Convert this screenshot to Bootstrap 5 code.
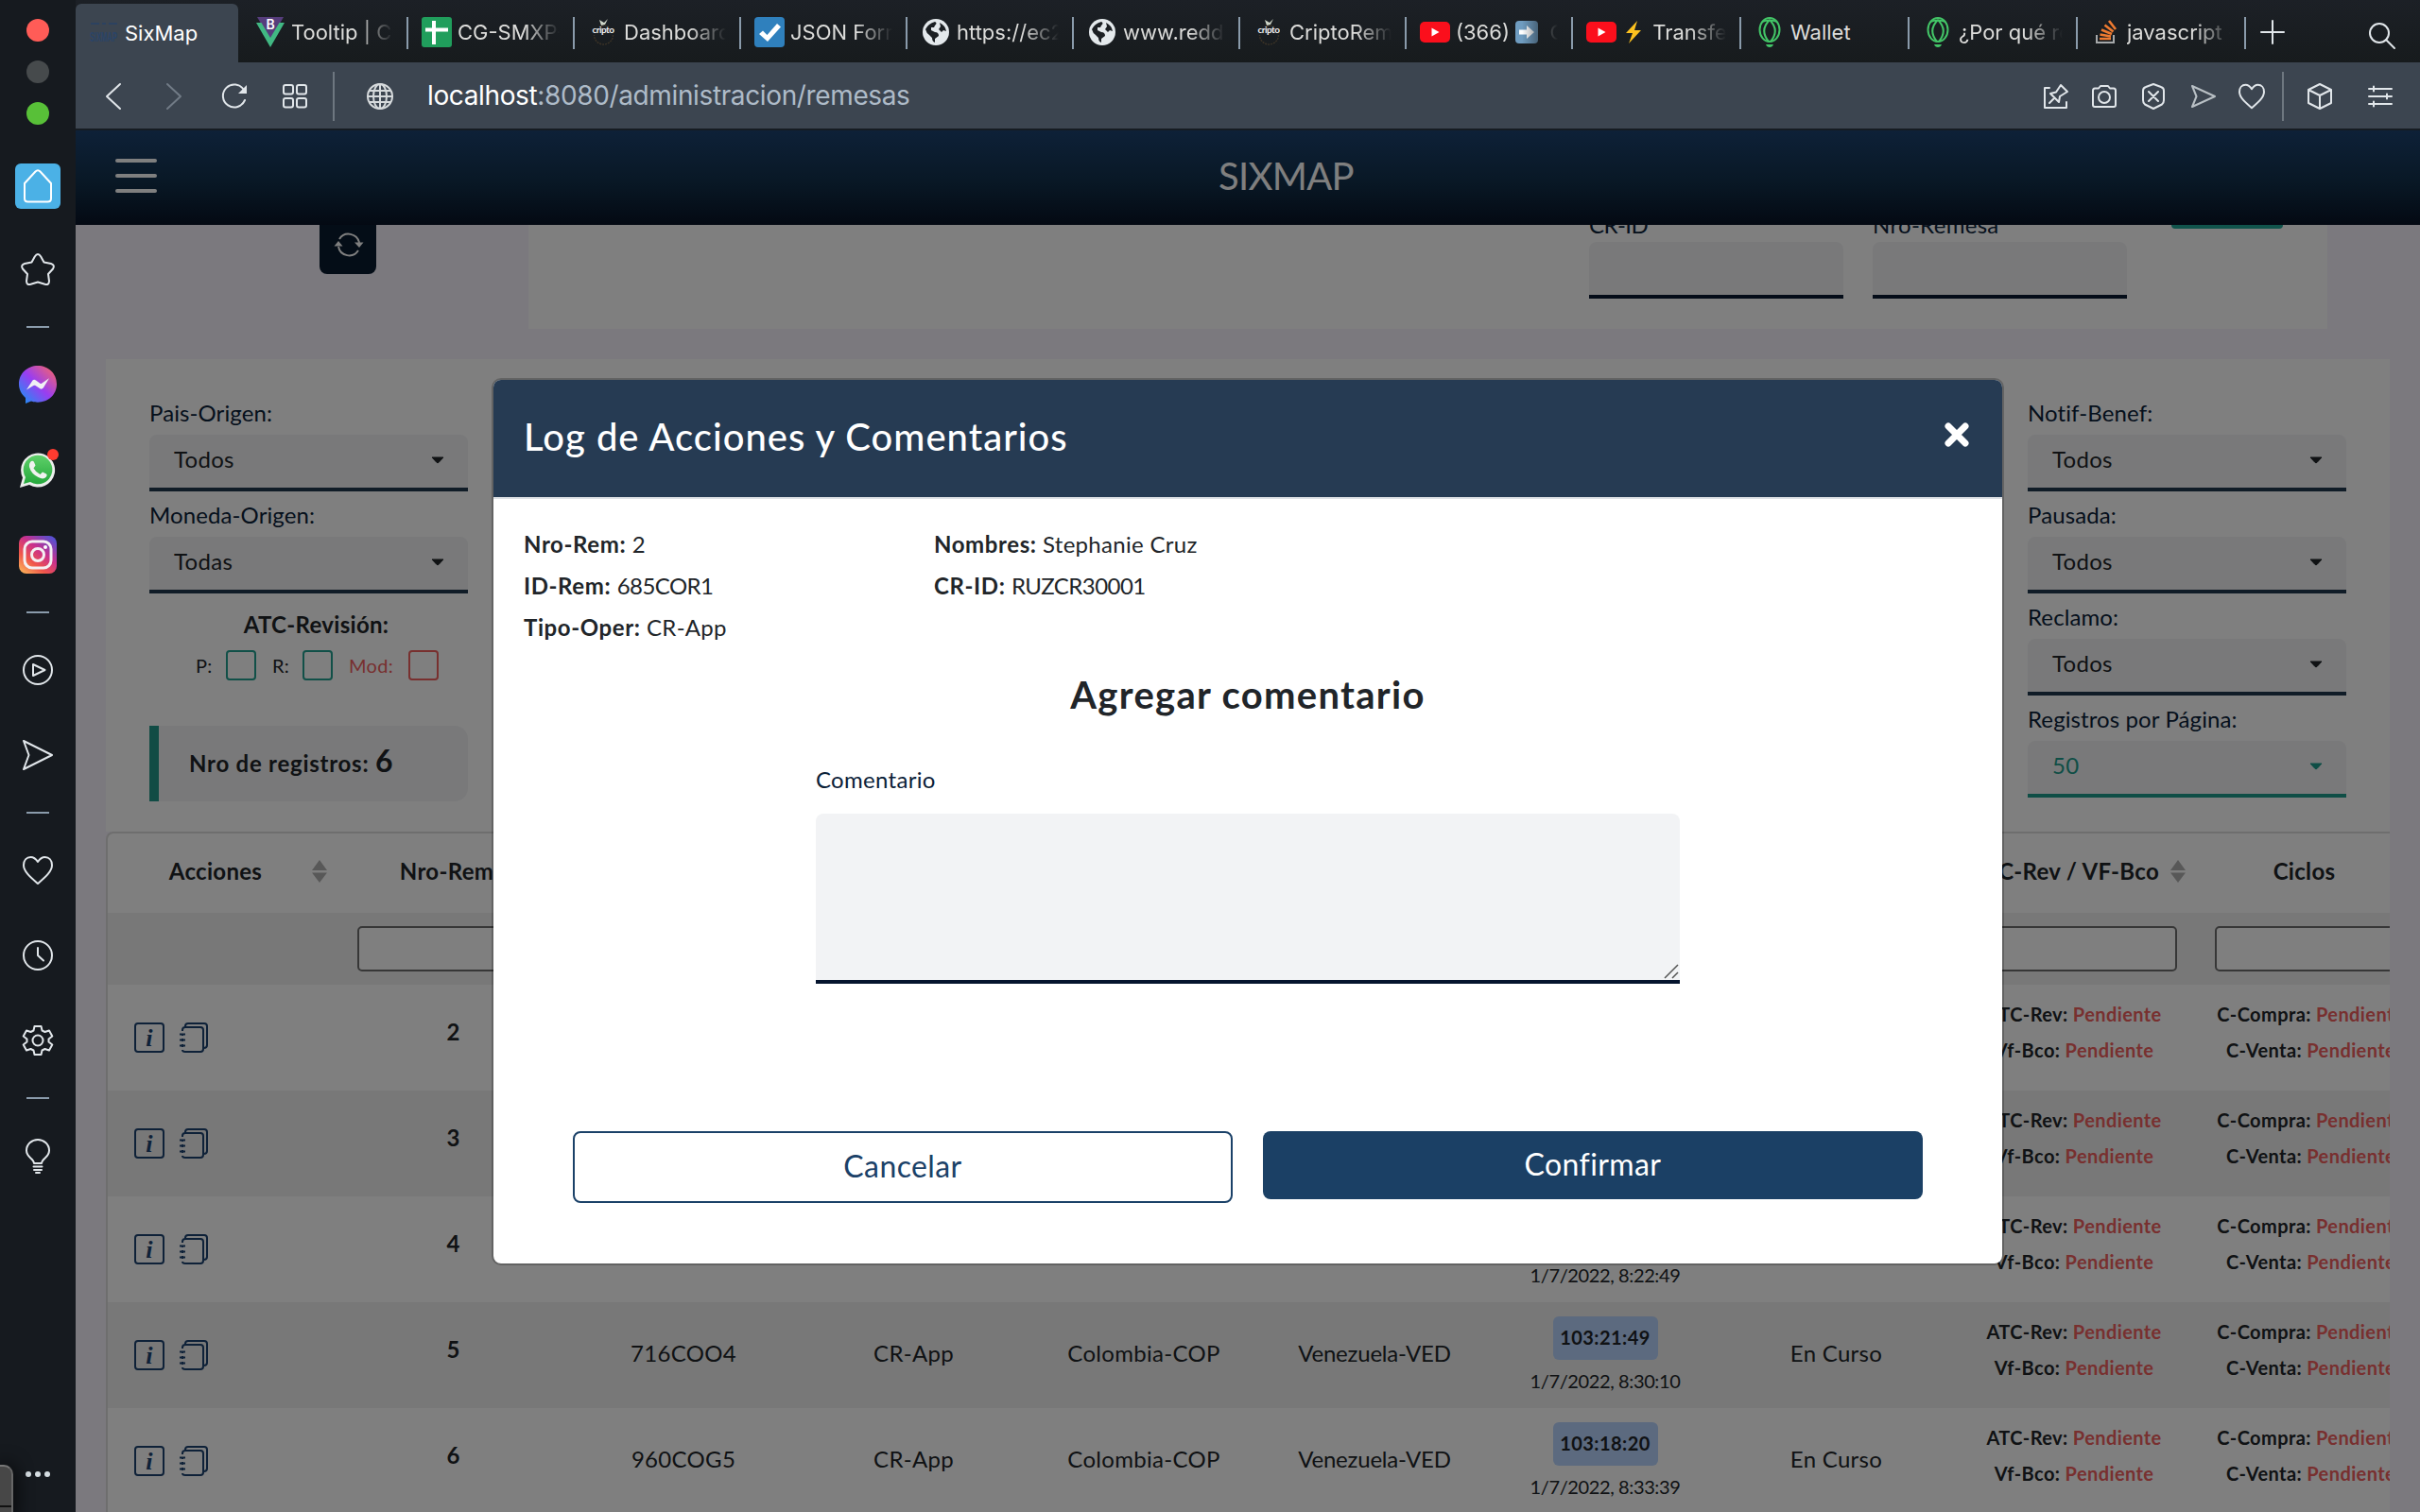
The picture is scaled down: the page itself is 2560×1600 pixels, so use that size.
<!DOCTYPE html>
<html lang="es">
<head>
<meta charset="utf-8">
<title>SixMap</title>
<link rel="stylesheet" href="https://cdn.jsdelivr.net/npm/bootstrap@5.3.0/dist/css/bootstrap.min.css">
<style>
html,body{margin:0;width:2560px;height:1600px;overflow:hidden;background:#161a1f}
body{font-family:Lato,"Noto Sans",sans-serif;font-size:24px;color:#212529;letter-spacing:.3px;line-height:1.2}
b,strong,.fw-bold{font-weight:700!important}
svg{display:block;flex:none;overflow:visible}
main{min-width:0}
.ln{fill:none;stroke:#e1e6ea;stroke-width:2;stroke-linecap:round;stroke-linejoin:round}
/* browser sidebar */
.side{width:80px;flex:none;height:1600px;background:#161a1f;padding-top:10px}
.light{height:44px}
.light i{width:24px;height:24px;border-radius:50%}
.slot{height:90px}
.slot-dash{height:32px}
.slot-dash i{width:24px;height:2px;background:#8a9bab}
.home{width:48px;height:48px;border-radius:6px;background:#4bb1e6}
.corner{left:0;top:1550px;width:14px;height:60px;border-radius:0 10px 0 0;background:#474747;border-top:2px solid #777;border-right:2px solid #666;box-shadow:0 0 20px #000}
.corner i{display:block;margin-top:41px;height:2px;background:#111}
.dots{margin-top:286px;height:12px;gap:4px}
.dots i{width:6px;height:6px;border-radius:50%;background:#d5dde2}
/* tabs */
.chrome{font-family:Inter,"Noto Sans",sans-serif;letter-spacing:0;font-size:22px;color:#dcdcda}
.tabs{height:66px;background:linear-gradient(#1c2026,#171b1d)}
.tb{width:176px;flex:none;height:66px;padding:2px 16px 0 14px;gap:6px}
.tb.wide{width:178px}
.tb.lead-tab{width:180px;padding-left:18px}
.tb::after{content:"";position:absolute;right:0;top:18px;width:2px;height:34px;background:#8a9bab}
.tb .fav{width:32px;flex:none;display:flex;justify-content:center}
.tb .cap{overflow:hidden;white-space:nowrap;flex:1;display:flex;align-items:center;-webkit-mask:linear-gradient(90deg,#000 65%,transparent 100%)}
.tb.first{width:172px;height:62px;margin-top:4px;background:#3c4550;border-radius:6px 6px 0 0;color:#fff;padding-bottom:2px}
.tb.first .cap,.tb.nofade .cap{-webkit-mask:none}
.tb.first::after{display:none}
.tabend{padding:2px 26px 0 16px}
.tools{height:72px;background:#3c4550;border-bottom:2px solid #161c22;padding-top:2px}
.tools .vr2{width:2px;height:52px;background:#6e7780}
.url{font-size:28px;color:#aebbc8;letter-spacing:-.37px}
.url span{color:#fff}
/* application */
.app{height:1462px;background:#f6f2fd;overflow:hidden}
.topbar{height:100px;padding-bottom:4px;background:linear-gradient(#1c4270,#12304b 55%,#081326)}
.burger{width:44px;margin-left:42px}
.burger i{display:block;height:4px;border-radius:2px;background:#fff;margin-bottom:12px}
.burger i:last-child{margin:0}
.brand{font-size:40px;color:#fff;letter-spacing:-.7px;font-weight:400;margin-left:1123px}
.upper{height:142px}
.refresh{width:60px;height:52px;margin-left:258px;background:#081a2e;border-radius:0 0 8px 8px}
.searchcard{width:1903px;height:110px;margin-left:161px;background:#fff;overflow:hidden}
.field{width:269px}
.field label{display:block;line-height:30px;margin:-15px 0 3px;color:#0a2138}
.field .box{height:60px;background:#f2f3f5;border-bottom:4px solid #0a1b33;border-radius:8px 8px 0 0}
.go{width:118px;height:4px;background:#22a898;border-radius:0 0 8px 8px}
.filters{height:500px;background:#fff;padding:32px 46px 0;margin:0 32px 0 32px}
.fcol{width:337px}
.fcol label{display:block;line-height:50px;height:48px;color:#0a2138;white-space:nowrap;letter-spacing:.1px}
.sel{height:60px;background:#f2f3f5;border-bottom:4px solid #20384f;border-radius:8px 8px 0 0;padding:0 25px 3px 26px}
.sel.teal{border-color:#1f9c8c;color:#1f9c8c}
.atc{line-height:34px;height:32px;margin-top:16px;padding-left:16px}
.checks{margin-top:12px;font-size:20px;line-height:32px;padding-left:49px}
.checks span{width:32px}
.checks .chk{margin-right:17px}
.checks .wide3{width:63px}
.chk{width:32px;height:32px;border:2px solid #22a090;border-radius:4px}
.coral{color:#f0605f}
.chk.red{border-color:#f0605f}
.count{height:80px;margin-top:48px;background:#f2f3f5;border-left:10px solid #22998a;border-radius:0 14px 14px 0;padding-left:32px;line-height:74px;letter-spacing:.75px}
.count span{font-size:32px}
.gridwrap{margin:0 32px;height:720px;overflow:hidden;background:#fff;border-left:2px solid #dcdcdc;border-top:2px solid #dcdcdc;border-top-left-radius:8px}
table.grid{width:2452px;table-layout:fixed;border-collapse:collapse;margin:0}
.grid td,.grid th{padding:0 0 3px;text-align:center;vertical-align:middle;white-space:nowrap}
.grid th{height:84px;font-weight:700}
.grid .flt td{height:76px;background:#f0f0f0;padding:0 20px}
.flt i{display:block;height:48px;border:2px solid #6e6e6e;border-radius:5px;background:#fff}
.grid tr.r td{height:112px}
.grid tr.r:nth-child(odd) td{background:#f0f0f0}
.grid tr.r td.acc{padding:0 0 0 28px}
.grid td.num{font-weight:700;padding-bottom:12px}
.grid td.stat{font-weight:700;font-size:20px;line-height:38px;letter-spacing:.4px;padding-bottom:12px}
.grid td.ved{letter-spacing:-.2px}
.pill{display:inline-block;width:111px;height:46px;line-height:45px;border-radius:6px;background:#b8d4ff;font-size:20px;font-weight:700;letter-spacing:.45px}
.when{font-size:20px;line-height:24px;margin-top:10px;letter-spacing:-.38px}
.shade{inset:0;background:rgba(0,0,0,.5)}
/* modal */
.dlg{width:1600px;margin:262px auto 0}
.dlg .modal-content{border:2px solid rgba(0,0,0,.22);border-radius:10px;height:939px;overflow:hidden;background-clip:padding-box}
.dlg .modal-header{height:126px;background:#263b53;border-bottom:2px solid #dee2e6;border-radius:0;padding:0 34px 4px 32px;color:#fff}
.dlg .modal-title{font-size:40px;font-weight:500;line-height:1.2;letter-spacing:1px}
.dlg .modal-header svg{margin-bottom:4px}
.dlg .modal-body{padding:26px 32px 0}
.info{line-height:44px}
.info>div{width:434px}
.info b{letter-spacing:.6px}
.tight{letter-spacing:-.55px}
.big{font-size:40px;font-weight:700;line-height:48px;margin:25px 0 0;letter-spacing:1.3px}
.cm{width:914px;margin:48px auto 0}
.cm label{display:block;line-height:36px;color:#0b2138;margin-bottom:18px}
.cm textarea{display:block;width:914px;height:180px;border:0;border-bottom:4px solid #05142e;border-radius:8px 8px 0 0;background:#f2f3f5;resize:none;box-shadow:none}
.grip{right:2px;bottom:6px}
.acts{margin-top:156px;gap:32px;padding:0 52px}
.acts .btn{width:698px;font-size:32px;border-radius:8px;padding:0 0 3px;letter-spacing:.4px}
.b1{height:76px;border:2px solid #1b4168;color:#1b4168;background:#fff}
.b2{height:72px;background:#1b4065;color:#fff;border:0}
</style>
<script src="https://cdn.jsdelivr.net/npm/bootstrap@5.3.0/dist/js/bootstrap.bundle.min.js"></script>
</head>
<body>
<svg width="0" height="0" class="position-absolute">
<defs>
<linearGradient id="ms" x1="0" y1="1" x2="1" y2="0"><stop offset="0" stop-color="#0d9bf5"/><stop offset=".5" stop-color="#9a3df0"/><stop offset="1" stop-color="#ff6a5c"/></linearGradient>
<linearGradient id="wa" x1="0" y1="0" x2="0" y2="1"><stop offset="0" stop-color="#5fd06a"/><stop offset="1" stop-color="#25a83c"/></linearGradient>
<linearGradient id="ig" x1="0" y1="1" x2=".8" y2="0"><stop offset="0" stop-color="#fdc15c"/><stop offset=".35" stop-color="#f0564a"/><stop offset=".65" stop-color="#c9308c"/><stop offset="1" stop-color="#5a4fd0"/></linearGradient>
<symbol id="caret" viewBox="0 0 14 8"><path d="M1 1H13L8 6.4Q7 7.2 6 6.4Z" fill="currentColor" stroke="currentColor" stroke-width="1" stroke-linejoin="round"/></symbol>
<symbol id="sort" viewBox="0 0 16 24"><path d="M0 11L8 0L16 11ZM0 13.5L8 24L16 13.5Z" fill="#b0b0b0"/></symbol>
<symbol id="world" viewBox="0 0 28 28"><circle cx="14" cy="14" r="14" fill="#e4e9ec"/><path d="M3 11Q6 5 13 3Q16 4 13 7L12 9H9V12L13 14Q17 14 17 18L13 21V25Q10 24 10 20L7 17Q4 15 3 11ZM18 4Q24 7 25 13L22 12L20 14L17 11L19 8Z" fill="#1b1f23"/></symbol>
<symbol id="yt" viewBox="0 0 32 22"><rect width="32" height="22" rx="5" fill="#fb0f1c"/><path d="M12.5 6.500V15.500L20.500 11Z" fill="#fff"/></symbol>
<symbol id="crypto" viewBox="0 0 24 28"><circle cx="12.500" cy="17" r="10" fill="none" stroke="#3a3226" stroke-width="1.500" stroke-dasharray="2 1"/><path d="M8 1L13 4L17 0L14 6L10 7Z" fill="#cfd6c8"/><rect x="0" y="8" width="24" height="9" fill="#1a1e22"/><text x="12" y="15" font-size="10" font-weight="700" font-family="Lato,sans-serif" letter-spacing="-.5" text-anchor="middle" fill="#f0f0f0">cripto</text></symbol>
<symbol id="leaf" viewBox="0 0 24 32"><g fill="none" stroke="#43c567" stroke-width="2"><ellipse cx="12" cy="13.500" rx="10.500" ry="12.500"/><path d="M4 5Q12 2 20 5M12 3Q1 14 11 26M12 3Q23 14 13 26"/></g><path d="M8 29H16Q15 32 12 32Q9 32 8 29Z" fill="#43c567"/></symbol>
<symbol id="book" viewBox="0 0 30 32"><path d="M6 5V4Q6 1 9 1H26Q29 1 29 4V24Q29 27 25.500 27M3 9V8Q3 5 6 5H22Q25 5 25 8V28Q25 31 22 31H6Q3 31 3 29M0 12.500H6M0 18.500H6M0 24.500H6M3 11.500V14M3 17V20M3 23V26" fill="none" stroke="#1c4270" stroke-width="2"/></symbol>
<symbol id="inf" viewBox="0 0 32 32"><rect x="1" y="1" width="30" height="30" rx="3" fill="none" stroke="#1c4270" stroke-width="2"/><text x="16" y="25" text-anchor="middle" font-size="26" font-weight="700" font-style="italic" font-family="Liberation Serif,serif" fill="#1c4270">i</text></symbol>
</defs>
</svg>
<div class="d-flex">
<aside class="side d-flex flex-column position-relative">
  <div class="light d-flex align-items-center justify-content-center"><i style="background:#ff5c57"></i></div>
  <div class="light d-flex align-items-center justify-content-center"><i style="background:#464a4c"></i></div>
  <div class="light d-flex align-items-center justify-content-center"><i style="background:#58c038"></i></div>
  <div class="slot mt-2 pt-1 d-flex align-items-center justify-content-center"><div class="home d-flex align-items-center justify-content-center"><svg width="30" height="36" viewBox="0 0 30 36"><path class="ln" d="M12.500 2.500Q15 0 17.500 2.500L29 15V31Q29 34.500 25.500 34.500H4.500Q1 34.500 1 31V15Z" style="stroke:#fff"/></svg></div></div>
  <div class="slot d-flex align-items-center justify-content-center"><svg width="36" height="34" viewBox="0 0 36 34"><path class="ln" d="M14.800 3.500Q18 -1.500 21.200 3.500L24.500 9.500L32 11Q36.500 12.500 34 16.500L29 22L30 29.500Q29.800 34 25.500 32.800L18 30.500L10.500 32.800Q6.200 34 6 29.500L7 22L2 16.500Q-.5 12.500 4 11L11.500 9.500Z"/></svg></div>
  <div class="slot-dash d-flex align-items-center justify-content-center"><i></i></div>
  <div class="slot d-flex align-items-center justify-content-center"><svg width="40" height="40" viewBox="0 0 40 40"><path d="M20 0C9 0 0 8 0 19.500C0 25.500 3 30.500 7 34V40L13 37.500C15 38.300 17.500 38.700 20 38.700C31 38.700 40 30.500 40 19.500C40 8 31 0 20 0Z" fill="url(#ms)"/><path d="M8 25.500L14.500 15.500Q16 14 18 15.500L22.500 18.800Q23.300 19.200 24 18.800L32 13.200L25.800 23.500Q24 25.500 22 24L17.500 21Q16.500 20.500 15.500 21Z" fill="#f0f0f4"/></svg></div>
  <div class="slot d-flex align-items-center justify-content-center"><svg width="40" height="40" viewBox="0 0 40 40"><path d="M1 39L4 28.500A18 18 0 1 1 11 36Z" fill="#eceeec"/><path d="M5 35L7 28A15.300 15.300 0 1 1 12 33Z" fill="url(#wa)"/><path d="M13 11Q15 10 16 12L17.500 15.500L15.500 18.500Q18 23 22.500 25L25 22.500L29 24.500Q30.500 25.500 29 27.500Q26 31 20.500 28Q13 24.500 11 17Q10.500 13 13 11Z" fill="#f0f2f0"/><circle cx="36" cy="4" r="6" fill="#ff3b30"/></svg></div>
  <div class="slot d-flex align-items-center justify-content-center"><svg width="40" height="40" viewBox="0 0 40 40"><rect width="40" height="40" rx="8" fill="url(#ig)"/><g fill="none" stroke="#f4f0f2" stroke-width="3"><rect x="6" y="6" width="28" height="28" rx="8"/><circle cx="20" cy="20" r="6.500"/></g><circle cx="28" cy="12" r="2" fill="#fff"/></svg></div>
  <div class="slot-dash d-flex align-items-center justify-content-center"><i></i></div>
  <div class="slot d-flex align-items-center justify-content-center"><svg class="ln" width="32" height="32" viewBox="0 0 32 32"><circle cx="16" cy="16" r="15"/><path d="M11 10V22L23.500 16Z"/></svg></div>
  <div class="slot d-flex align-items-center justify-content-center"><svg class="ln" width="32" height="32" viewBox="0 0 32 32"><path d="M1 1L31 16L1 31L6.500 16Z"/></svg></div>
  <div class="slot-dash d-flex align-items-center justify-content-center"><i></i></div>
  <div class="slot d-flex align-items-center justify-content-center"><svg class="ln" width="32" height="30" viewBox="0 0 32 30"><path d="M16 6C14 3 11.500 1 8.500 1C4 1 1 4.500 1 9.500C1 16.500 9 23 16 29C23 23 31 16.500 31 9.500C31 4.500 28 1 23.500 1C20.500 1 18 3 16 6Z"/></svg></div>
  <div class="slot d-flex align-items-center justify-content-center"><svg class="ln" width="32" height="32" viewBox="0 0 32 32"><circle cx="16" cy="16" r="15"/><path d="M16 8V16L22 21.500"/></svg></div>
  <div class="slot d-flex align-items-center justify-content-center"><svg class="ln" width="32" height="32" viewBox="0 0 32 32"><circle cx="16" cy="16" r="5.500"/><path d="M12.500 1H19.500L20.500 5.500L23.500 7L28 5.500L31.300 11.500L27.500 14.500V17.500L31.300 20.500L28 26.500L23.500 25L20.500 26.500L19.500 31H12.500L11.500 26.500L8.500 25L4 26.500L.7 20.500L4.500 17.500V14.500L.7 11.500L4 5.500L8.500 7L11.500 5.500Z"/></svg></div>
  <div class="slot-dash d-flex align-items-center justify-content-center"><i></i></div>
  <div class="slot d-flex align-items-center justify-content-center"><svg class="ln" width="26" height="37" viewBox="0 0 26 37"><path d="M9 26C9 21 1 20 1 12.500C1 6 6.500 1 13 1S25 6 25 12.500C25 20 17 21 17 26ZM8.500 29.500H17.500M9 33H17M11 36H15"/></svg></div>
  <div class="dots d-flex align-items-center justify-content-center"><i></i><i></i><i></i></div>
  <div class="corner position-absolute"><i></i></div>
</aside>
<main class="flex-grow-1">
  <div class="chrome tabs d-flex">
    <div class="tb first d-flex align-items-center position-relative"><div class="fav"><svg width="30" height="24" viewBox="0 0 30 24"><path d="M1 2H10M13 2H17M20 2H29" stroke="#2c4260" stroke-width="2"/><text x="0" y="21" textLength="29" lengthAdjust="spacingAndGlyphs" font-family="Liberation Sans Narrow,Liberation Sans,sans-serif" font-size="15" font-weight="700" fill="#2a4468">SIXMAP</text></svg></div><div class="cap">SixMap</div></div>
    <div class="tb lead-tab d-flex align-items-center position-relative"><div class="fav"><svg width="30" height="32" viewBox="0 0 30 32"><path d="M1 0H29L15 24Z" fill="#563d7c"/><path d="M0 6H5.500L15 22L24.500 6H30L15 32Z" fill="#41b883"/><text x="15" y="13" text-anchor="middle" font-size="14" font-weight="600" font-family="Inter,sans-serif" fill="#fff">B</text></svg></div><div class="cap">Tooltip | Co</div></div>
    <div class="tb d-flex align-items-center position-relative"><div class="fav"><svg width="32" height="32"><rect width="32" height="32" rx="3" fill="#209e5c"/><path d="M4 13.500H28M13 4V29" stroke="#fff" stroke-width="4"/></svg></div><div class="cap">CG-SMXP-</div></div>
    <div class="tb d-flex align-items-center position-relative"><div class="fav"><svg width="24" height="28"><use href="#crypto"/></svg></div><div class="cap">Dashboard</div></div>
    <div class="tb d-flex align-items-center position-relative"><div class="fav"><svg width="32" height="32"><rect width="32" height="32" rx="4" fill="#2f80bd"/><path d="M5 18L9 14.500L13.500 19L24 7L28 10.500L14 26Z" fill="#fff"/></svg></div><div class="cap">JSON Form</div></div>
    <div class="tb d-flex align-items-center position-relative"><div class="fav"><svg width="28" height="28"><use href="#world"/></svg></div><div class="cap">https://ec2</div></div>
    <div class="tb d-flex align-items-center position-relative"><div class="fav"><svg width="28" height="28"><use href="#world"/></svg></div><div class="cap">www.reddit</div></div>
    <div class="tb d-flex align-items-center position-relative"><div class="fav"><svg width="24" height="28"><use href="#crypto"/></svg></div><div class="cap">CriptoRem</div></div>
    <div class="tb d-flex align-items-center position-relative"><div class="fav"><svg width="32" height="22"><use href="#yt"/></svg></div><div class="cap">(366)&nbsp;<svg width="24" height="24" viewBox="0 0 24 24"><rect width="24" height="24" rx="4" fill="#6f9cc0"/><path d="M4 9.500H12V5L20 12L12 19V14.500H4Z" fill="#fff"/></svg>&nbsp; C</div></div>
    <div class="tb wide d-flex align-items-center position-relative"><div class="fav"><svg width="32" height="22"><use href="#yt"/></svg></div><div class="cap"><svg width="26" height="24" viewBox="0 0 26 24"><path d="M16 0L4 13H11L7 24L20 10H13Z" fill="#fdc21f"/></svg>&nbsp;Transfe</div></div>
    <div class="tb wide nofade d-flex align-items-center position-relative"><div class="fav"><svg width="24" height="32"><use href="#leaf"/></svg></div><div class="cap">Wallet</div></div>
    <div class="tb wide d-flex align-items-center position-relative"><div class="fav"><svg width="24" height="32"><use href="#leaf"/></svg></div><div class="cap">¿Por qué re</div></div>
    <div class="tb wide d-flex align-items-center position-relative"><div class="fav"><svg width="22" height="26" viewBox="0 0 22 26"><path d="M1 16V24H19V16" fill="none" stroke="#a5a8aa" stroke-width="2"/><path d="M4 20H16M4.500 15.500L16 17.500M6 10.500L17 15M9.500 5.500L18.500 12.500M14 1L21 10" stroke="#ee7a30" stroke-width="2.600"/></svg></div><div class="cap">javascript -</div></div>
    <div class="tabend d-flex align-items-center flex-grow-1 justify-content-between"><svg class="ln" width="24" height="24"><path d="M0 12H24M12 0V24"/></svg><svg class="ln mt-2" width="28" height="28" viewBox="0 0 28 28"><circle cx="11" cy="11" r="10"/><path d="M18 18L27 27"/></svg></div>
  </div>
  <div class="chrome tools d-flex align-items-center">
    <svg class="ln" width="16" height="28" style="margin-left:32px"><path d="M15 1L1 14L15 27"/></svg>
    <svg class="ln" width="16" height="28" style="margin-left:48px;stroke:#717b86"><path d="M1 1L15 14L1 27"/></svg>
    <svg class="ln" width="28" height="28" viewBox="0 0 28 28" style="margin-left:42px"><path d="M25 18A12 12 0 1 1 24 7"/><path d="M27 2V11H18Z" fill="#e1e6ea" stroke="none"/></svg>
    <svg class="ln" width="26" height="26" viewBox="0 0 26 26" style="margin-left:37px"><rect x="1" y="1" width="10" height="9.500" rx="2"/><rect x="15" y="1" width="10" height="9.500" rx="2"/><rect x="1" y="15" width="10" height="9.500" rx="2"/><rect x="15" y="15" width="10" height="9.500" rx="2"/></svg>
    <div class="vr2" style="margin-left:27px"></div>
    <svg class="ln" width="28" height="28" viewBox="0 0 28 28" style="margin-left:34px;stroke:#d6dadc"><circle cx="14" cy="14" r="13"/><ellipse cx="14" cy="14" rx="7" ry="13"/><path d="M14 1V27M1 14H27M3 8H25M3 20H25"/></svg>
    <div class="url" style="margin-left:36px"><span>localhost</span>:8080/administracion/remesas</div>
    <div class="ms-auto d-flex align-items-center">
      <svg class="ln" width="26" height="26" viewBox="0 0 26 26"><path d="M6 4H1V25H24V19M6 20L11 15M7 10L16 19L17 13L25 8L18 1L13 8.500Z"/></svg>
      <svg class="ln" width="26" height="24" viewBox="0 0 26 24" style="margin-left:25px"><path d="M3 3.500H7L9 1H17L19 3.500H23Q25 3.500 25 6V21Q25 23 23 23H3Q1 23 1 21V6Q1 3.500 3 3.500Z"/><circle cx="13" cy="13" r="6"/></svg>
      <svg class="ln" width="24" height="28" viewBox="0 0 24 28" style="margin-left:27px"><path d="M12 1L20 4Q23 5 23 8V18Q23 21 21 22.500L12 27L3 22.500Q1 21 1 18V8Q1 5 4 4ZM7 9L17 19M17 9L7 19"/></svg>
      <svg class="ln" width="26" height="24" viewBox="0 0 26 24" style="margin-left:28px;stroke:#b9c0c5"><path d="M1 1L25 12L1 23L5.500 12Z"/></svg>
      <svg class="ln" width="28" height="26" viewBox="0 0 32 30" style="margin-left:24px;stroke-width:2.300"><path d="M16 6C14 3 11.500 1 8.500 1C4 1 1 4.500 1 9.500C1 16.500 9 23 16 29C23 23 31 16.500 31 9.500C31 4.500 28 1 23.500 1C20.500 1 18 3 16 6Z"/></svg>
      <div class="vr2" style="margin:0 25px 0 18px"></div>
      <svg class="ln" width="26" height="28" viewBox="0 0 26 28"><path d="M13 1L25 7V21L13 27L1 21V7ZM1 7L13 13L25 7M13 13V27"/></svg>
      <svg class="ln" width="24" height="22" viewBox="0 0 24 22" style="margin:0 30px 0 39px"><path d="M0 3H24M0 11H24M0 19H24M5 .5V5.500M19 8.500V13.500M5 16.500V21.500"/></svg>
    </div>
  </div>
  <div class="app position-relative">
    <div class="topbar d-flex align-items-center">
      <div class="burger"><i></i><i></i><i></i></div>
      <div class="brand">SIXMAP</div>
    </div>
    <div class="upper d-flex">
      <div class="refresh"><svg width="32" height="26" viewBox="0 0 32 26" style="margin:8px 0 0 15px"><path d="M6 7A11.500 11.500 0 0 1 27 11M26 19A11.500 11.500 0 0 1 5 15" fill="none" stroke="#fff" stroke-width="2"/><path d="M22 10.500H31.500L27 16ZM.5 14.500H9.500L5 9Z" fill="#fff"/></svg></div>
      <div class="searchcard d-flex">
        <div class="field" style="margin-left:1122px"><label class="tight">CR-ID</label><div class="box"></div></div>
        <div class="field" style="margin-left:31px"><label>Nro-Remesa</label><div class="box"></div></div>
        <div class="go" style="margin-left:47px"></div>
      </div>
    </div>
    <div class="filters d-flex justify-content-between">
      <div class="fcol">
        <label>Pais-Origen:</label><div class="sel d-flex align-items-center justify-content-between">Todos<svg width="14" height="8"><use href="#caret"/></svg></div>
        <label>Moneda-Origen:</label><div class="sel d-flex align-items-center justify-content-between">Todas<svg width="14" height="8"><use href="#caret"/></svg></div>
        <div class="atc text-center fw-bold">ATC-Revisión:</div>
        <div class="checks d-flex"><span>P:</span><div class="chk"></div><span>R:</span><div class="chk"></div><span class="coral wide3">Mod:</span><div class="chk red"></div></div>
        <div class="count fw-bold">Nro de registros: <span>6</span></div>
      </div>
      <div class="fcol">
        <label>Notif-Benef:</label><div class="sel d-flex align-items-center justify-content-between">Todos<svg width="14" height="8"><use href="#caret"/></svg></div>
        <label>Pausada:</label><div class="sel d-flex align-items-center justify-content-between">Todos<svg width="14" height="8"><use href="#caret"/></svg></div>
        <label>Reclamo:</label><div class="sel d-flex align-items-center justify-content-between">Todos<svg width="14" height="8"><use href="#caret"/></svg></div>
        <label>Registros por Página:</label><div class="sel teal d-flex align-items-center justify-content-between">50<svg width="14" height="8"><use href="#caret"/></svg></div>
      </div>
    </div>
    <div class="gridwrap">
      <table class="grid">
        <colgroup><col style="width:244px"><col style="width:243px"><col style="width:244px"><col style="width:243px"><col style="width:244px"><col style="width:244px"><col style="width:244px"><col style="width:245px"><col style="width:258px"><col style="width:243px"></colgroup>
        <thead><tr>
          <th><div class="d-flex align-items-center"><span class="flex-grow-1" style="padding-left:12px">Acciones</span><svg width="16" height="24" style="margin-right:12px"><use href="#sort"/></svg></div></th>
          <th style="padding-right:14px">Nro-Rem</th><th></th><th></th><th></th><th></th><th></th><th></th>
          <th><div class="d-flex align-items-center justify-content-end">ATC-Rev / VF-Bco<svg width="16" height="24" style="margin:0 11px 0 12px"><use href="#sort"/></svg></div></th>
          <th style="padding-right:14px">Ciclos</th></tr></thead>
        <tbody id="rows"><tr class="flt"><td></td><td><i></i></td><td><i></i></td><td><i></i></td><td><i></i></td><td><i></i></td><td><i></i></td><td><i></i></td><td><i></i></td><td><i></i></td></tr></tbody>
      </table>
    </div>
    <div class="shade position-absolute"></div>
    <div class="modal d-block position-absolute" role="dialog">
      <div class="dlg">
        <div class="modal-content">
          <div class="modal-header d-flex align-items-center justify-content-between"><h5 class="modal-title">Log de Acciones y Comentarios</h5><svg width="28" height="28" viewBox="0 0 28 28"><path d="M5 5L23 23M23 5L5 23" stroke="#fff" stroke-width="7" stroke-linecap="round"/></svg></div>
          <div class="modal-body">
            <div class="info d-flex">
              <div><b>Nro-Rem:</b> 2<br><b>ID-Rem:</b> <span class="tight">685COR1</span><br><b>Tipo-Oper:</b> CR-App</div>
              <div><b>Nombres:</b> Stephanie Cruz<br><b>CR-ID:</b> <span class="tight">RUZCR30001</span></div>
            </div>
            <h4 class="big text-center">Agregar comentario</h4>
            <div class="cm position-relative"><label>Comentario</label><textarea class="form-control"></textarea><svg class="grip position-absolute" width="14" height="14"><path d="M0 14L14 0M8 14L14 8" stroke="#555" stroke-width="1.500"/></svg></div>
            <div class="acts d-flex"><button class="btn b1">Cancelar</button><button class="btn b2">Confirmar</button></div>
          </div>
        </div>
      </div>
    </div>
  </div>
</main>
</div>
<script>
const data=[[2],[3],[4,'','','','','','1/7/2022, 8:22:49',''],[5,'716COO4','CR-App','Colombia-COP','Venezuela-VED','103:21:49','1/7/2022, 8:30:10','En Curso'],[6,'960COG5','CR-App','Colombia-COP','Venezuela-VED','103:18:20','1/7/2022, 8:33:39','En Curso']];
const p='<span class="coral">Pendiente</span>';
document.getElementById('rows').insertAdjacentHTML('beforeend',data.map(d=>`<tr class="r"><td class="acc"><div class="d-flex" style="gap:16px"><svg width="32" height="32"><use href="#inf"/></svg><svg width="30" height="32"><use href="#book"/></svg></div></td><td class="num">${d[0]}</td><td>${d[1]||''}</td><td>${d[2]||''}</td><td>${d[3]||''}</td><td class="ved">${d[4]||''}</td><td><div class="pill">${d[5]||'&nbsp;'}</div><div class="when">${d[6]||'&nbsp;'}</div></td><td>${d[7]||''}</td><td class="stat"><div>ATC-Rev: ${p}</div><div>Vf-Bco: ${p}</div></td><td class="stat"><div>C-Compra: ${p}</div><div>C-Venta: ${p}</div></td></tr>`).join(''));
</script>
</body>
</html>
